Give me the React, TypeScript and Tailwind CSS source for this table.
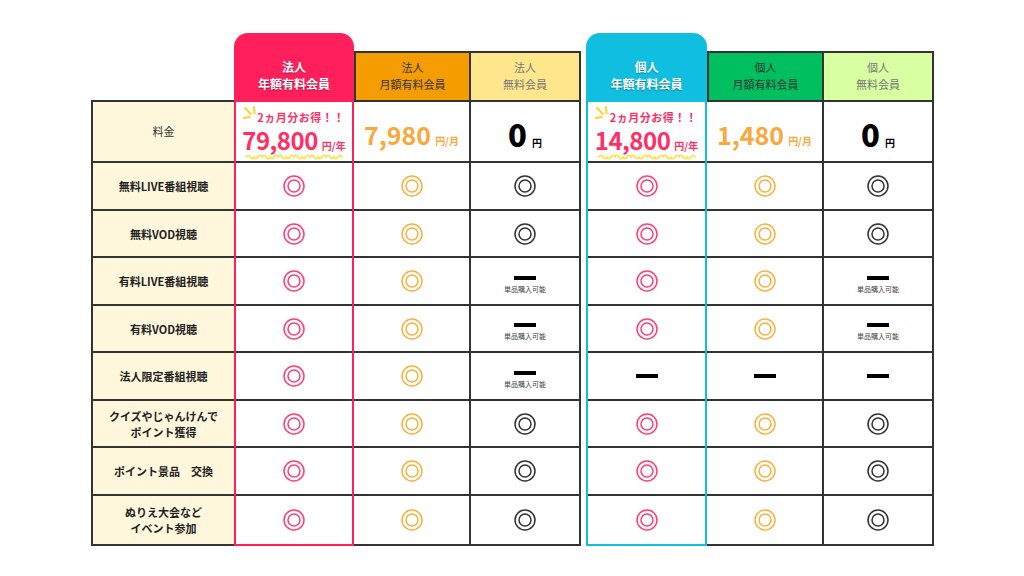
import React from "react";

type Mark = "o" | "dash" | "single";

type Plan = {
  key: string;
  lines: [string, string];
  width: string;
  tone: "pink" | "orange" | "yellow" | "cyan" | "green" | "lime";
  price: React.ReactNode;
  marks: Mark[];
};

const FONT = { fontFamily: '"Noto Sans CJK JP", "Noto Sans", sans-serif' };

const ROW_LABELS: string[][] = [
  ["無料LIVE番組視聴"],
  ["無料VOD視聴"],
  ["有料LIVE番組視聴"],
  ["有料VOD視聴"],
  ["法人限定番組視聴"],
  ["クイズやじゃんけんで", "ポイント獲得"],
  ["ポイント景品\u3000交換"],
  ["ぬりえ大会など", "イベント参加"],
];

const ROW_H = ["h-[48px]", "h-[47px]", "h-[48px]", "h-[47px]", "h-[48px]", "h-[47px]", "h-[48px]", "h-[48px]"];

const circleColor: Record<Plan["tone"], string> = {
  pink: "#ff3f72",
  cyan: "#ff3f72",
  orange: "#f9b03f",
  green: "#f9b03f",
  yellow: "#333333",
  lime: "#333333",
};

function DoubleCircle({ color }: { color: string }) {
  return (
    <svg width="24" height="24" viewBox="0 0 24 24" fill="none">
      <circle cx="12" cy="12" r="10" stroke={color} strokeWidth="1.5" />
      <circle cx="12" cy="12" r="6" stroke={color} strokeWidth="1.5" />
    </svg>
  );
}

function Dash() {
  return <div className="h-[4px] w-[22px] bg-black" />;
}

function MarkCell({ mark, color }: { mark: Mark; color: string }) {
  if (mark === "o") return <DoubleCircle color={color} />;
  if (mark === "dash") return <Dash />;
  return (
    <div className="flex flex-col items-center gap-[6px] pt-[6px]">
      <Dash />
      <span className="text-[7px] leading-none text-[#444]">単品購入可能</span>
    </div>
  );
}

function Sparkle() {
  return (
    <svg className="absolute left-[6px] top-[3px]" width="18" height="20" viewBox="0 0 18 20" fill="none">
      <path d="M3 3 L9 9" stroke="#ffd21f" strokeWidth="2" strokeLinecap="round" />
      <path d="M12 2 L12.5 8" stroke="#ffd21f" strokeWidth="2" strokeLinecap="round" />
      <path d="M2 13 L7.5 12" stroke="#ffd21f" strokeWidth="2" strokeLinecap="round" />
    </svg>
  );
}

function Wave({ width }: { width: number }) {
  const segs = Math.floor(width / 8);
  let d = "M1 4";
  for (let i = 0; i < segs; i++) {
    const x = 1 + i * 8;
    d += ` Q${x + 2} ${i % 2 === 0 ? 0.5 : 7.5} ${x + 4} 4 T${x + 8} 4`;
  }
  return (
    <svg width={width} height="8" viewBox={`0 0 ${width} 8`} fill="none">
      <path d={d} stroke="#ffe23a" strokeWidth="1.6" strokeLinecap="round" />
    </svg>
  );
}

function AnnualPrice({ amount }: { amount: string }) {
  return (
    <div className="relative flex h-full w-full flex-col items-center pt-[9px]">
      <Sparkle />
      <span className="pl-[14px] text-[11px] font-bold leading-[12px] tracking-[0.5px] text-[#ff2f66]">
        2ヵ月分お得！！
      </span>
      <div className="mt-[7px] flex items-baseline">
        <span className="text-[24px] font-bold leading-[20px] tracking-[-0.5px] text-[#ff2f66]">{amount}</span>
        <span className="ml-[4px] text-[10px] font-bold leading-[12px] text-[#ff2f66]">円/年</span>
      </div>
      <div className="mt-[1px]">
        <Wave width={98} />
      </div>
    </div>
  );
}

function MonthlyPrice({ amount }: { amount: string }) {
  return (
    <div className="flex items-baseline pt-[6px]">
      <span className="text-[25px] font-bold leading-none text-[#f9a93a]">{amount}</span>
      <span className="ml-[4px] text-[10px] font-bold text-[#f9a93a]">円/月</span>
    </div>
  );
}

function FreePrice() {
  return (
    <div className="flex items-baseline pt-[4px]">
      <span className="text-[31px] font-black leading-none text-black">0</span>
      <span className="ml-[5px] text-[10px] font-bold text-black">円</span>
    </div>
  );
}

const headerStyles: Record<Plan["tone"], string> = {
  pink: "h-[69px] pt-[14px] rounded-t-[14px] bg-[#ff1f5b] text-white text-[12px] font-bold",
  cyan: "h-[69px] pt-[14px] rounded-t-[14px] bg-[#10bfdf] text-white text-[12px] font-bold",
  orange: "h-[51px] pb-[2px] border-2 border-[#333] bg-[#f59c00] text-[#333] text-[11px]",
  green: "h-[51px] pb-[2px] border-2 border-[#333] bg-[#00bf5f] text-[#333] text-[11px]",
  yellow: "h-[51px] pb-[2px] border-y-2 border-r-2 border-[#333] bg-[#fde68c] text-[#777] text-[11px]",
  lime: "h-[51px] pb-[2px] border-y-2 border-r-2 border-[#333] bg-[#d8ffa2] text-[#777] text-[11px]",
};

const bodyStyles: Record<Plan["tone"], string> = {
  pink: "border-x-2 border-b-2 border-[#ff1f5b]",
  cyan: "border-x-2 border-b-2 border-[#10bfdf]",
  orange: "border-r-2 border-b-2 border-[#333]",
  green: "border-r-2 border-b-2 border-[#333]",
  yellow: "border-r-2 border-b-2 border-[#333]",
  lime: "border-r-2 border-b-2 border-[#333]",
};

function PlanColumn({ plan }: { plan: Plan }) {
  const featured = plan.tone === "pink" || plan.tone === "cyan";
  const color = circleColor[plan.tone];
  return (
    <div className={`flex flex-col ${plan.width}`}>
      <div className="flex h-[69px] items-end">
        <div
          className={`flex w-full flex-col items-center justify-center leading-[17px] ${headerStyles[plan.tone]} ${
            featured ? "[text-shadow:0_1px_1px_rgba(0,0,0,0.35)]" : ""
          }`}
        >
          <span>{plan.lines[0]}</span>
          <span>{plan.lines[1]}</span>
        </div>
      </div>
      <div className={`flex flex-col bg-white ${bodyStyles[plan.tone]}`}>
        <div className="flex h-[61px] items-center justify-center border-b-2 border-[#333]">{plan.price}</div>
        {plan.marks.map((m, i) => (
          <div
            key={i}
            className={`flex items-center justify-center ${ROW_H[i]} ${
              i < plan.marks.length - 1 ? "border-b-2 border-[#333]" : "h-[46px]"
            }`}
          >
            <MarkCell mark={m} color={color} />
          </div>
        ))}
      </div>
    </div>
  );
}

function LabelColumn() {
  return (
    <div className="flex w-[143px] flex-col">
      <div className="h-[67px]" />
      <div className="flex flex-col border-2 border-r-0 border-[#333] bg-[#fff7dc]">
        <div className="flex h-[61px] items-center justify-center border-b-2 border-[#333] text-[11px] text-[#333]">
          料金
        </div>
        {ROW_LABELS.map((lines, i) => (
          <div
            key={i}
            className={`flex flex-col items-center justify-center text-[11px] font-bold leading-[16px] text-[#222] ${ROW_H[i]} ${
              i < ROW_LABELS.length - 1 ? "border-b-2 border-[#333]" : "h-[46px]"
            }`}
          >
            {lines.map((l) => (
              <span key={l} className="whitespace-pre">
                {l}
              </span>
            ))}
          </div>
        ))}
      </div>
    </div>
  );
}

const ALL: Mark[] = ["o", "o", "o", "o", "o", "o", "o", "o"];

const corporate: Plan[] = [
  { key: "c1", lines: ["法人", "年額有料会員"], width: "w-[120px]", tone: "pink", price: <AnnualPrice amount="79,800" />, marks: ALL },
  { key: "c2", lines: ["法人", "月額有料会員"], width: "w-[117px]", tone: "orange", price: <MonthlyPrice amount="7,980" />, marks: ALL },
  {
    key: "c3",
    lines: ["法人", "無料会員"],
    width: "w-[110px]",
    tone: "yellow",
    price: <FreePrice />,
    marks: ["o", "o", "single", "single", "single", "o", "o", "o"],
  },
];

const personal: Plan[] = [
  {
    key: "p1",
    lines: ["個人", "年額有料会員"],
    width: "w-[121px]",
    tone: "cyan",
    price: <AnnualPrice amount="14,800" />,
    marks: ["o", "o", "o", "o", "dash", "o", "o", "o"],
  },
  {
    key: "p2",
    lines: ["個人", "月額有料会員"],
    width: "w-[117px]",
    tone: "green",
    price: <MonthlyPrice amount="1,480" />,
    marks: ["o", "o", "o", "o", "dash", "o", "o", "o"],
  },
  {
    key: "p3",
    lines: ["個人", "無料会員"],
    width: "w-[110px]",
    tone: "lime",
    price: <FreePrice />,
    marks: ["o", "o", "single", "single", "dash", "o", "o", "o"],
  },
];

export default function App() {
  return (
    <div className="h-[576px] w-[1024px] overflow-hidden bg-white pl-[91px] pt-[33px]" style={FONT}>
      <div className="flex items-start gap-[5px]">
        <div className="flex">
          <LabelColumn />
          {corporate.map((p) => (
            <PlanColumn key={p.key} plan={p} />
          ))}
        </div>
        <div className="flex">
          {personal.map((p) => (
            <PlanColumn key={p.key} plan={p} />
          ))}
        </div>
      </div>
    </div>
  );
}
